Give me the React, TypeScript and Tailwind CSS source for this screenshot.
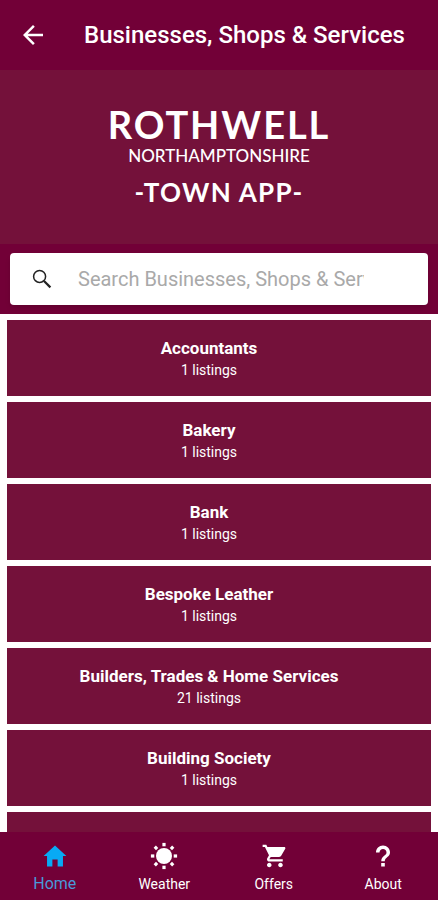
import { useState } from "react";
import { IoMdCart, IoMdHelp, IoMdHome } from "react-icons/io";
import { MdArrowBack } from "react-icons/md";

const categories = [
  { name: "Accountants", listings: 1 },
  { name: "Bakery", listings: 1 },
  { name: "Bank", listings: 1 },
  { name: "Bespoke Leather", listings: 1 },
  { name: "Builders, Trades & Home Services", listings: 21 },
  { name: "Building Society", listings: 1 },
  { name: "Cafes", listings: 4 },
];

const SunIcon = ({ size }: { size: number }) => (
  <svg width={size} height={size} viewBox="0 0 28 28" fill="currentColor">
    <circle cx="14" cy="14" r="8" />
    {[0, 45, 90, 135, 180, 225, 270, 315].map((angle) => (
      <rect
        key={angle}
        x="12.4"
        y="0.9"
        width="3.2"
        height="3.4"
        transform={`rotate(${angle} 14 14)`}
      />
    ))}
  </svg>
);

const SearchIcon = () => (
  <svg
    width="24"
    height="24"
    viewBox="0 0 24 24"
    fill="none"
    stroke="currentColor"
    className="shrink-0 text-[#222222]"
  >
    <circle cx="9.6" cy="9.4" r="6" strokeWidth="1.5" />
    <path d="M14 14l6.4 6.4" strokeWidth="2.2" />
  </svg>
);

const tabs = [
  { id: 1, name: "Home", icon: IoMdHome },
  { id: 2, name: "Weather", icon: SunIcon },
  { id: 3, name: "Offers", icon: IoMdCart },
  { id: 4, name: "About", icon: IoMdHelp },
];

export default function App() {
  // States
  const [activeTab, setActiveTab] = useState(1);
  const [search, setSearch] = useState("");

  const filtered = categories.filter((category) =>
    category.name.toLowerCase().includes(search.toLowerCase()),
  );

  // category cards
  const cards = filtered.map((category) => (
    <li key={category.name}>
      <button className="w-full h-19 pr-5 flex flex-col items-center justify-center bg-[#74113a] text-white cursor-pointer">
        <span className="text-[17px] leading-6 font-bold">{category.name}</span>
        <span className="text-sm leading-5">{category.listings} listings</span>
      </button>
    </li>
  ));

  // bottom tabs
  const tabComps = tabs.map((tab) => {
    const Icon = tab.icon;
    const active = activeTab === tab.id;
    return (
      <button
        key={tab.id}
        onClick={() => {
          setActiveTab(tab.id);
        }}
        className={`flex-1 flex flex-col items-center pt-2.5 gap-1 cursor-pointer ${active ? "text-[#08aaf5]" : "text-white"}`}
      >
        <Icon size={28} />
        <span
          className={`leading-5 ${active ? "text-base text-[#4a98d8]" : "text-sm"}`}
        >
          {tab.name}
        </span>
      </button>
    );
  });

  return (
    <div className="h-dvh flex flex-col bg-white font-['Roboto',sans-serif]">
      <header className="h-17.5 shrink-0 flex items-center px-4.5 gap-9 bg-[#720037] text-white">
        <button aria-label="Back" className="cursor-pointer">
          <MdArrowBack size={30} />
        </button>
        <h1 className="text-2xl font-medium whitespace-nowrap">
          Businesses, Shops &amp; Services
        </h1>
      </header>
      <div className="h-43.5 shrink-0 pt-1.5 flex flex-col items-center justify-center bg-[#74113a] text-white text-center font-['Lato',sans-serif]">
        <p className="text-[38px] leading-11 font-bold tracking-wider">
          ROTHWELL
        </p>
        <p className="text-[17px] leading-5 font-medium">NORTHAMPTONSHIRE</p>
        <p className="text-[26px] leading-13 font-bold tracking-wider">
          -TOWN APP-
        </p>
      </div>
      <div className="shrink-0 px-2.5 py-2.25 bg-[#720037]">
        <label className="h-13 flex items-center gap-6 pl-5 pr-16 rounded-sm bg-white shadow-md">
          <SearchIcon />
          <input
            type="text"
            aria-label="Search"
            value={search}
            onChange={(e) => setSearch(e.target.value)}
            placeholder="Search Businesses, Shops & Services"
            className="flex-1 min-w-0 text-xl text-[#333333] outline-none placeholder:text-[#a9a9a9]"
          />
        </label>
      </div>
      <ul className="flex-1 min-h-0 overflow-y-auto [scrollbar-width:none] flex flex-col gap-1.5 px-1.75 py-1.5">
        {cards}
      </ul>
      <nav className="h-17 shrink-0 flex bg-[#720037]">{tabComps}</nav>
    </div>
  );
}
